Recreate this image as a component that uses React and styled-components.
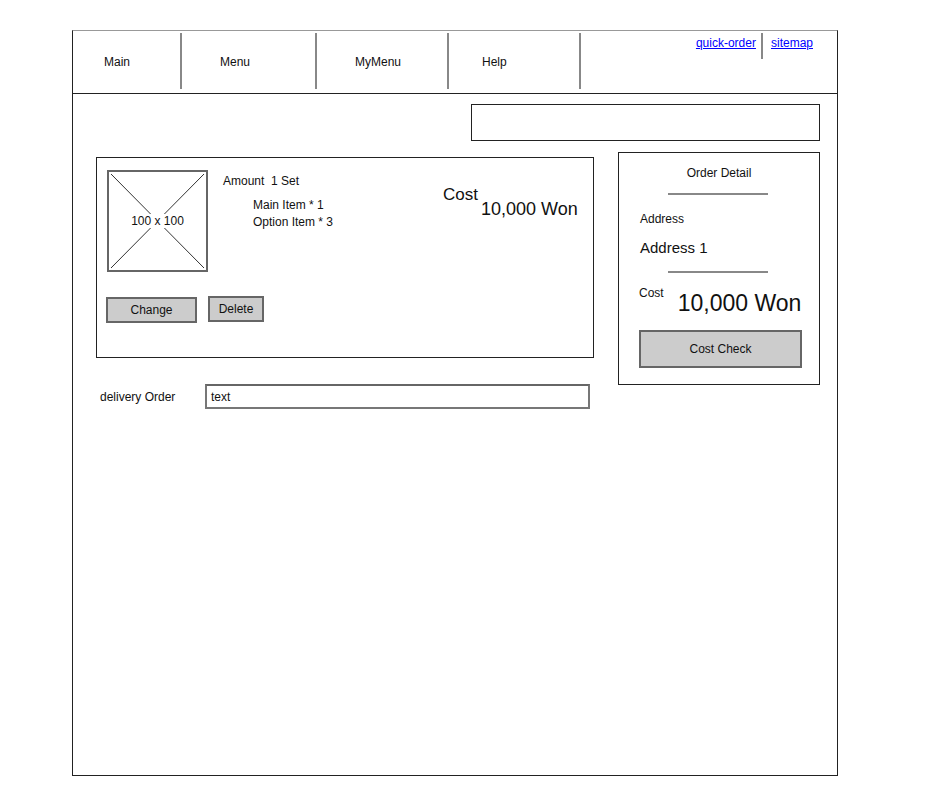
import React from 'react'
import styled, { createGlobalStyle } from 'styled-components'

const GlobalStyle = createGlobalStyle`
    body {
        margin: 0;
        background: #fff;
        font-family: "Liberation Sans", Arial, sans-serif;
        color: #111;
    }
`

const Page = styled.div`
    padding: 30px 0 0 72px;
`

const Frame = styled.div`
    width: 764px;
    height: 744px;
    border: 1px solid #222;
    border-top-color: #999;
    display: flex;
    flex-direction: column;
`

const Header = styled.header`
    height: 62px;
    border-bottom: 1px solid #222;
    display: flex;
`

const NavItem = styled.div`
    width: ${props => props.width}px;
    padding-left: ${props => props.pad}px;
    box-sizing: border-box;
    display: flex;
    align-items: center;
    font-size: 12px;
`

const Divider = styled.div`
    width: 2px;
    height: ${props => props.h || 56}px;
    margin-top: 2px;
    background: #888;
    flex-shrink: 0;
`

const TopLinks = styled.div`
    margin-left: auto;
    margin-right: 24px;
    display: flex;
    align-items: flex-start;
    gap: 5px;
`

const TopLink = styled.a`
    color: #00f;
    font-size: 12px;
    line-height: 15px;
    padding-top: 5px;
    text-decoration: underline;
    & + div { margin-right: 3px; }
`

const Body = styled.div`
    padding: 10px 17px 0 23px;
    display: flex;
    flex-direction: column;
`

const SearchBox = styled.div`
    align-self: flex-end;
    width: 347px;
    height: 35px;
    border: 1px solid #222;
`

const MainRow = styled.div`
    margin-top: 11px;
    display: flex;
    align-items: flex-start;
    gap: 24px;
`

const LeftColumn = styled.div`
    margin-top: 5px;
    display: flex;
    flex-direction: column;
`

const CartCard = styled.div`
    width: 476px;
    height: 175px;
    padding: 12px 10px;
    border: 1px solid #222;
    display: flex;
    flex-direction: column;
`

const CardTop = styled.div`
    display: flex;
    align-items: flex-start;
`

const ImageBox = styled.div`
    position: relative;
    width: 97px;
    height: 98px;
    border: 2px solid #666;
    display: flex;
    align-items: center;
    justify-content: center;
    flex-shrink: 0;
    svg {
        position: absolute;
        inset: 0;
    }
`

const ImageLabel = styled.span`
    position: relative;
    background: #fff;
    font-size: 12px;
    line-height: 14px;
    padding: 0 1px;
`

const Details = styled.div`
    width: 220px;
    margin-left: 15px;
    padding-top: 3px;
`

const Line = styled.div`
    font-size: ${props => props.size || 12}px;
    line-height: ${props => props.lh || 16}px;
    margin-left: ${props => props.indent || 0}px;
`

const SubItems = styled.div`
    margin-top: 8px;
    margin-left: 30px;
`

const CostBlock = styled.div`
    margin-top: 15px;
    display: flex;
    align-items: flex-start;
    gap: 3px;
`

const CostLabel = styled.span`
    font-size: ${props => props.size}px;
    line-height: ${props => props.lh}px;
`

const CostValue = styled.span`
    font-size: ${props => props.size}px;
    line-height: ${props => props.lh}px;
    margin-top: ${props => props.offset}px;
`

const ButtonRow = styled.div`
    margin-top: 25px;
    margin-left: -1px;
    display: flex;
    align-items: flex-start;
    gap: 11px;
`

const Button = styled.button`
    width: ${props => props.width}px;
    height: ${props => props.height}px;
    margin-top: ${props => props.raise ? -1 : 0}px;
    background: #ccc;
    border: 2px solid #666;
    font-family: inherit;
    font-size: 12px;
    color: #111;
    padding: 0;
`

const DeliveryRow = styled.div`
    margin-top: 26px;
    display: flex;
    align-items: center;
`

const DeliveryLabel = styled.label`
    width: 109px;
    padding-left: 4px;
    box-sizing: border-box;
    font-size: 12px;
`

const TextInput = styled.div`
    width: 377px;
    height: 21px;
    border: 2px solid #777;
    border-top-color: #666;
    padding-left: 4px;
    display: flex;
    align-items: center;
    font-size: 12px;
`

const OrderPanel = styled.div`
    width: 180px;
    height: 219px;
    padding: 12px 0 0 20px;
    border: 1px solid #222;
    display: flex;
    flex-direction: column;
`

const PanelTitle = styled.div`
    margin-left: -20px;
    text-align: center;
    font-size: 12px;
    line-height: 16px;
`

const PanelRule = styled.div`
    width: 100px;
    height: 2px;
    margin: ${props => props.mt}px 0 0 29px;
    background: #888;
`

const CostRow = styled.div`
    margin-top: 13px;
    display: flex;
    align-items: flex-start;
    gap: 14px;
`

const FeaturedImage = () => (
    <ImageBox>
        <svg width="97" height="98" viewBox="0 0 97 98">
            <line x1="2" y1="2" x2="95" y2="96" stroke="#333" strokeWidth="1" />
            <line x1="95" y1="2" x2="2" y2="96" stroke="#333" strokeWidth="1" />
        </svg>
        <ImageLabel>100 x 100</ImageLabel>
    </ImageBox>
)

const App = () => {
    return (
        <Page>
            <GlobalStyle />
            <Frame>
                <Header>
                    <NavItem width={107} pad={31}>Main</NavItem>
                    <Divider />
                    <NavItem width={133} pad={38}>Menu</NavItem>
                    <Divider />
                    <NavItem width={130} pad={38}>MyMenu</NavItem>
                    <Divider />
                    <NavItem width={130} pad={33}>Help</NavItem>
                    <Divider />
                    <TopLinks>
                        <TopLink href="#">quick-order</TopLink>
                        <Divider h={26} />
                        <TopLink href="#">sitemap</TopLink>
                    </TopLinks>
                </Header>
                <Body>
                    <SearchBox />
                    <MainRow>
                        <LeftColumn>
                            <CartCard>
                                <CardTop>
                                    <FeaturedImage />
                                    <Details>
                                        <Line>Amount&nbsp; 1 Set</Line>
                                        <SubItems>
                                            <Line lh={17}>Main Item * 1</Line>
                                            <Line lh={17}>Option Item * 3</Line>
                                        </SubItems>
                                    </Details>
                                    <CostBlock>
                                        <CostLabel size={17} lh={20}>Cost</CostLabel>
                                        <CostValue size={18} lh={20} offset={14}>10,000 Won</CostValue>
                                    </CostBlock>
                                </CardTop>
                                <ButtonRow>
                                    <Button width={91} height={26}>Change</Button>
                                    <Button width={56} height={26} raise>Delete</Button>
                                </ButtonRow>
                            </CartCard>
                            <DeliveryRow>
                                <DeliveryLabel>delivery Order</DeliveryLabel>
                                <TextInput>text</TextInput>
                            </DeliveryRow>
                        </LeftColumn>
                        <OrderPanel>
                            <PanelTitle>Order Detail</PanelTitle>
                            <PanelRule mt={12} />
                            <Line style={{ marginTop: 16 }} indent={1}>Address</Line>
                            <Line size={15} lh={18} indent={1} style={{ marginTop: 12 }}>Address 1</Line>
                            <PanelRule mt={14} />
                            <CostRow>
                                <CostLabel size={12} lh={14}>Cost</CostLabel>
                                <CostValue size={23} lh={26} offset={4}>10,000 Won</CostValue>
                            </CostRow>
                            <Button width={163} height={38} style={{ marginTop: 14 }}>Cost Check</Button>
                        </OrderPanel>
                    </MainRow>
                </Body>
            </Frame>
        </Page>
    )
}

export default App
